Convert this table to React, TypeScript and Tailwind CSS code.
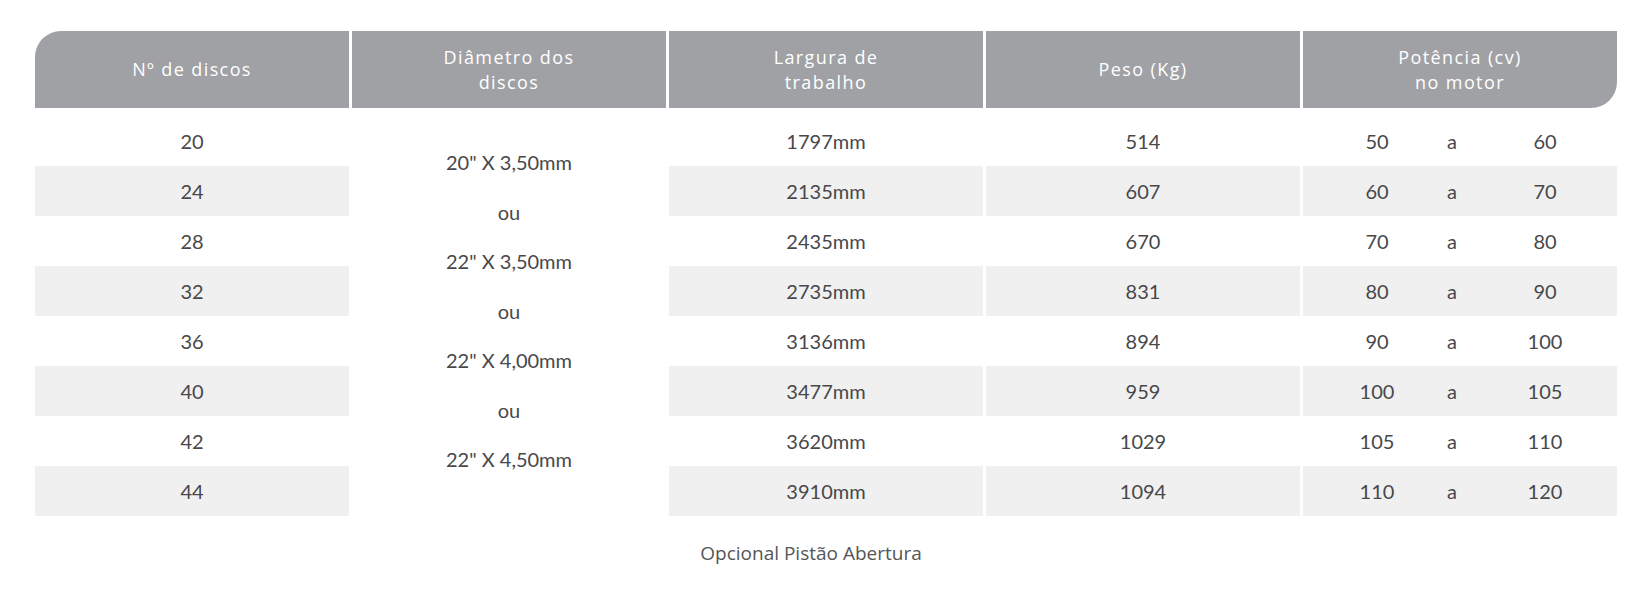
import React from "react";

const headers = [
  ["Nº de discos"],
  ["Diâmetro dos", "discos"],
  ["Largura de", "trabalho"],
  ["Peso (Kg)"],
  ["Potência (cv)", "no motor"],
];

const rows = [
  { discos: "20", largura: "1797mm", peso: "514", de: "50", ate: "60" },
  { discos: "24", largura: "2135mm", peso: "607", de: "60", ate: "70" },
  { discos: "28", largura: "2435mm", peso: "670", de: "70", ate: "80" },
  { discos: "32", largura: "2735mm", peso: "831", de: "80", ate: "90" },
  { discos: "36", largura: "3136mm", peso: "894", de: "90", ate: "100" },
  { discos: "40", largura: "3477mm", peso: "959", de: "100", ate: "105" },
  { discos: "42", largura: "3620mm", peso: "1029", de: "105", ate: "110" },
  { discos: "44", largura: "3910mm", peso: "1094", de: "110", ate: "120" },
];

const diametros = ['20" X 3,50mm', "ou", '22" X 3,50mm', "ou", '22" X 4,00mm', "ou", '22" X 4,50mm'];

const App = () => {
  return (
    <div className="w-[1648px] h-[591px] bg-white pt-[31px] pl-[35px] text-[#48484b]">
      <div className="w-[1582px]">
        {/* Header */}
        <div className="grid grid-cols-5 gap-x-[3px] h-[77px] font-['Open_Sans',sans-serif] text-[18px] leading-[25px] tracking-[1.4px] text-white">
          {headers.map((h, i) => (
            <div
              key={i}
              className={`flex flex-col items-center justify-center bg-[#a0a1a5] ${
                i === 0 ? "rounded-tl-[26px]" : ""
              } ${i === 4 ? "rounded-br-[26px]" : ""}`}
            >
              {h.map((line) => (
                <span key={line}>{line}</span>
              ))}
            </div>
          ))}
        </div>

        {/* Body */}
        <div className="mt-[8px] grid grid-cols-5 grid-rows-[repeat(8,50px)] gap-x-[3px] font-['Lato',sans-serif] text-[20px]">
          {rows.map((r, i) => {
            const bg = i % 2 === 1 ? "bg-[#f0f0f0]" : "bg-white";
            return (
              <React.Fragment key={r.discos}>
                <div className={`flex items-center justify-center ${bg}`}>{r.discos}</div>
                {i === 0 && (
                  <div className="row-span-8 flex flex-col items-center pt-[22px]">
                    {diametros.map((d, j) => (
                      <span key={j} className="h-[49.5px] leading-[49.5px]">
                        {d}
                      </span>
                    ))}
                  </div>
                )}
                <div className={`flex items-center justify-center ${bg}`}>{r.largura}</div>
                <div className={`flex items-center justify-center ${bg}`}>{r.peso}</div>
                <div className={`flex items-center ${bg}`}>
                  <span className="ml-[20px] w-[108px] text-center">{r.de}</span>
                  <span className="w-[42px] text-center">a</span>
                  <span className="w-[144px] text-center">{r.ate}</span>
                </div>
              </React.Fragment>
            );
          })}
        </div>

        {/* Footer */}
        <div className="mt-[24px] pr-[30px] text-center font-['Open_Sans',sans-serif] text-[19px] leading-[26px] text-[#555558]">
          Opcional Pistão Abertura
        </div>
      </div>
    </div>
  );
};

export default App;
